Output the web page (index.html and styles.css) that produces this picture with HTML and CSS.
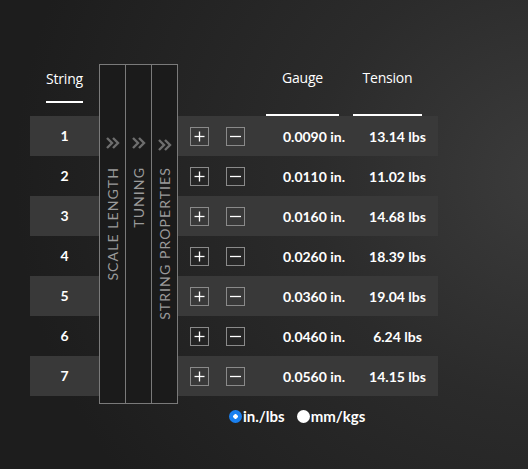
FILE: index.html
```html
<!DOCTYPE html>
<html lang="en">
<head>
    <meta charset="UTF-8">
    <meta name="viewport" content="width=device-width, initial-scale=1.0">
    <title>String Tension Chart</title>
    <link rel="stylesheet" href="styles.css">
</head>
<body>
    <div class="chart">
        <!-- String numbers -->
        <div class="strings">
            <div class="col-head"><span class="head-label">String</span></div>
            <div class="string-row shade">1</div>
            <div class="string-row">2</div>
            <div class="string-row shade">3</div>
            <div class="string-row">4</div>
            <div class="string-row shade">5</div>
            <div class="string-row">6</div>
            <div class="string-row shade">7</div>
        </div>

        <!-- Collapsed side panels -->
        <div class="panels">
            <div class="panel">
                <svg class="chevron" viewBox="0 0 14 12"><polyline points="1,1 6,6 1,11"/><polyline points="7,1 12,6 7,11"/></svg>
                <span class="panel-label">Scale Length</span>
            </div>
            <div class="panel">
                <svg class="chevron" viewBox="0 0 14 12"><polyline points="1,1 6,6 1,11"/><polyline points="7,1 12,6 7,11"/></svg>
                <span class="panel-label">Tuning</span>
            </div>
            <div class="panel panel-last">
                <svg class="chevron" viewBox="0 0 14 12"><polyline points="1,1 6,6 1,11"/><polyline points="7,1 12,6 7,11"/></svg>
                <span class="panel-label">String Properties</span>
            </div>
        </div>

        <!-- Gauge / tension -->
        <div class="props">
            <div class="props-head">
                <span class="head-label gauge-head">Gauge</span>
                <span class="head-label tension-head">Tension</span>
            </div>
            <div id="propRows"></div>
        </div>
    </div>

    <div class="units">
        <label class="unit"><input type="radio" name="units" checked>in./lbs</label>
        <label class="unit"><input type="radio" name="units">mm/kgs</label>
    </div>

    <script>
        const strings = [
            { gauge: '0.0090 in.', tension: '13.14 lbs' },
            { gauge: '0.0110 in.', tension: '11.02 lbs' },
            { gauge: '0.0160 in.', tension: '14.68 lbs' },
            { gauge: '0.0260 in.', tension: '18.39 lbs' },
            { gauge: '0.0360 in.', tension: '19.04 lbs' },
            { gauge: '0.0460 in.', tension: '6.24 lbs' },
            { gauge: '0.0560 in.', tension: '14.15 lbs' }
        ];

        const plusIcon = '<svg viewBox="0 0 17 17"><line x1="3.5" y1="8.5" x2="13.5" y2="8.5"/><line x1="8.5" y1="3.5" x2="8.5" y2="13.5"/></svg>';
        const minusIcon = '<svg viewBox="0 0 17 17"><line x1="3" y1="8.5" x2="14" y2="8.5"/></svg>';

        const rows = document.getElementById('propRows');
        strings.forEach((s, i) => {
            const row = document.createElement('div');
            row.className = 'prop-row' + (i % 2 === 0 ? ' shade' : '');
            row.innerHTML =
                '<button class="step">' + plusIcon + '</button>' +
                '<button class="step">' + minusIcon + '</button>' +
                '<span class="gauge">' + s.gauge + '</span>' +
                '<span class="tension">' + s.tension + '</span>';
            rows.appendChild(row);
        });
    </script>
</body>
</html>
```

FILE: styles.css
```css
html, body {
    height: 100%;
}
body {
    margin: 0;
    font-family: Lato, "Open Sans", sans-serif;
    color: #fff;
    background: radial-gradient(ellipse 540px 500px at 105% 38%, #3c3c3c 0%, #2b2b2b 45%, #1d1d1d 100%);
    background-color: #1d1d1d;
}
.chart {
    display: flex;
    margin: 64px 0 0 30px;
}

/* headers */
.head-label {
    display: inline-block;
    font-family: "Open Sans", Lato, sans-serif;
    font-size: 14px;
    line-height: 18px;
    font-weight: 500;
    letter-spacing: -0.2px;
    text-align: center;
    border-bottom: 2px solid #fff;
}

/* string column */
.strings {
    width: 69px;
}
.col-head {
    height: 52px;
    padding-top: 4px;
    box-sizing: border-box;
    text-align: center;
}
.col-head .head-label {
    padding-bottom: 13px;
}
.string-row {
    height: 40px;
    line-height: 40px;
    text-align: center;
    font-size: 14px;
    font-weight: 700;
}
.shade {
    background-color: #393939;
}

/* side panels */
.panels {
    display: flex;
    height: 340px;
}
.panel {
    width: 26px;
    border: 1px solid #7a7a7a;
    border-right: none;
    background-color: #1b1b1b;
    display: flex;
    flex-direction: column;
    align-items: center;
    padding-top: 72px;
    box-sizing: border-box;
}
.panel-last {
    border-right: 1px solid #7a7a7a;
    width: 27px;
}
.chevron {
    width: 14px;
    height: 12px;
    fill: none;
    stroke: #6e6e6e;
    stroke-width: 2.4;
}
.panel-last .chevron {
    margin-top: 2px;
}
.panel-label {
    margin-top: 18px;
    writing-mode: vertical-rl;
    transform: rotate(180deg);
    text-transform: uppercase;
    font-size: 14px;
    font-weight: 400;
    letter-spacing: 1.1px;
    color: #9a9a9a;
    line-height: 14px;
}
.panel-last .panel-label {
    margin-top: 16px;
}

/* gauge and tension */
.props {
    width: 260px;
}
.props-head {
    height: 52px;
    padding: 5px 0 0 88px;
    box-sizing: border-box;
    display: flex;
    gap: 14px;
}
.props-head .head-label {
    padding-bottom: 14px;
}
.gauge-head {
    width: 73px;
}
.tension-head {
    width: 69px;
}
.prop-row {
    height: 40px;
    display: flex;
    align-items: center;
    padding-left: 12px;
    font-size: 14px;
    font-weight: 700;
}
.step {
    width: 19px;
    height: 19px;
    padding: 0;
    margin: 0 17px 0 0;
    border: 1px solid #8a8a8a;
    background: none;
    cursor: pointer;
    display: flex;
}
.step svg {
    width: 17px;
    height: 17px;
    stroke: #fff;
    stroke-width: 1.3;
}
.step + .step {
    margin-right: 0;
}
.gauge {
    margin-left: 16px;
    width: 106px;
    text-align: center;
}
.tension {
    width: 61px;
    text-align: center;
}

/* unit switch */
.units {
    display: flex;
    align-items: center;
    gap: 12px;
    height: 14px;
    margin: 5px 0 0 229px;
    font-size: 15px;
    font-weight: 700;
}
.unit {
    display: flex;
    align-items: center;
    gap: 1px;
}
.unit input {
    appearance: none;
    margin: 0;
    width: 13px;
    height: 13px;
    border-radius: 50%;
    background-color: #fff;
    cursor: pointer;
}
.unit input:checked {
    background: radial-gradient(circle, #fff 0 2px, #1a80f0 2.5px);
}
```
